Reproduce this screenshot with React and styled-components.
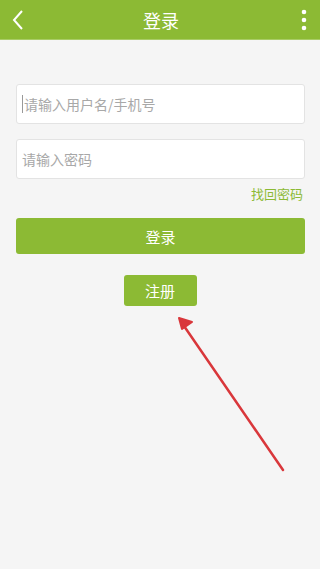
import React from "react";
import styled, { createGlobalStyle } from "styled-components";

const GlobalStyle = createGlobalStyle`
  html, body {
    margin: 0;
    padding: 0;
    background: #f5f5f5;
    font-family: "Noto Sans CJK SC", "Noto Sans", sans-serif;
  }
`;

const green = "#8cba34";

const Page = styled.div`
  position: relative;
  width: 320px;
  min-height: 569px;
  background: #f5f5f5;
  overflow: hidden;
`;

const TopBar = styled.header`
  height: 40px;
  background: ${green};
  display: flex;
  align-items: center;
  justify-content: space-between;
  padding: 0 6px 0 8px;
  box-sizing: border-box;
  border-bottom: 1px solid #a9cc66;
`;

const Title = styled.h1`
  margin: 0;
  font-size: 18px;
  font-weight: 400;
  color: #fff;
  line-height: 40px;
`;

const IconSlot = styled.div`
  width: 20px;
  height: 40px;
  display: flex;
  align-items: center;
  justify-content: center;
`;

const Form = styled.div`
  display: flex;
  flex-direction: column;
  padding: 44px 15px 0 16px;
`;

const Field = styled.div`
  height: 38px;
  background: #fff;
  border: 1px solid #e3e3e3;
  border-radius: 3px;
  display: flex;
  align-items: center;
  padding-left: 5px;
  margin-bottom: ${(p) => p.gap || 0}px;
  font-size: 14px;
  color: #a8a8a8;
`;

const Caret = styled.span`
  width: 1px;
  height: 18px;
  background: #999;
  margin-right: 1px;
`;

const Forgot = styled.div`
  align-self: flex-end;
  margin: 7px 2px 0 0;
  font-size: 13px;
  line-height: 16px;
  color: #8cba34;
`;

const MainButton = styled.button`
  margin-top: 16px;
  height: 36px;
  border: none;
  border-radius: 3px;
  background: ${green};
  color: #fff;
  font-family: inherit;
  font-size: 15px;
`;

const RegisterButton = styled.button`
  align-self: center;
  margin: 21px 0 0 -1px;
  width: 73px;
  height: 31px;
  border: none;
  border-radius: 3px;
  background: ${green};
  color: #fff;
  font-family: inherit;
  font-size: 15px;
`;

const Annotation = styled.svg`
  position: absolute;
  left: 0;
  top: 0;
  pointer-events: none;
`;

export default function App() {
  return (
    <Page>
      <GlobalStyle />
      <TopBar>
        <IconSlot>
          <svg width="12" height="22" viewBox="0 0 12 22">
            <path d="M10 2 L2 11 L10 20" stroke="#fff" strokeWidth="2" fill="none" />
          </svg>
        </IconSlot>
        <Title>登录</Title>
        <IconSlot>
          <svg width="6" height="22" viewBox="0 0 6 22">
            <circle cx="3" cy="3" r="2.3" fill="#fff" />
            <circle cx="3" cy="11" r="2.3" fill="#fff" />
            <circle cx="3" cy="19" r="2.3" fill="#fff" />
          </svg>
        </IconSlot>
      </TopBar>
      <Form>
        <Field gap={15}>
          <Caret />
          请输入用户名/手机号
        </Field>
        <Field>请输入密码</Field>
        <Forgot>找回密码</Forgot>
        <MainButton>登录</MainButton>
        <RegisterButton>注册</RegisterButton>
      </Form>
      <Annotation width="320" height="569" viewBox="0 0 320 569">
        <path d="M283 470 L184 326" stroke="#d9373b" strokeWidth="2.5" strokeLinecap="round" />
        <path d="M179 318 L192 322 L182 329 Z" fill="#d9373b" stroke="#d9373b" strokeWidth="2" strokeLinejoin="round" />
      </Annotation>
    </Page>
  );
}
